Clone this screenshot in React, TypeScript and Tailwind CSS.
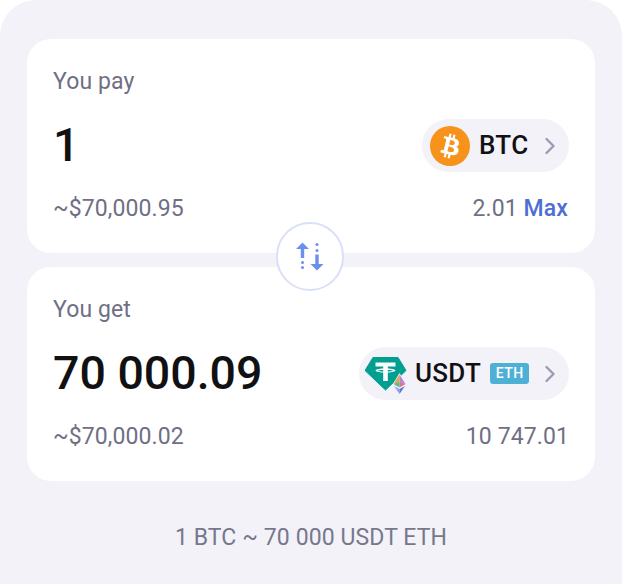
import React from 'react';
import { ChevronRight } from 'lucide-react';

const BtcIcon = () => (
  <svg width="40" height="40" viewBox="0 0 32 32" className="shrink-0">
    <circle cx="16" cy="16" r="16" fill="#f7931a" />
    <path
      fill="#fff"
      d="M23.189 14.02c.314-2.096-1.283-3.223-3.465-3.975l.708-2.84-1.728-.43-.69 2.765c-.454-.114-.92-.22-1.385-.326l.695-2.783L15.596 6l-.708 2.839c-.376-.086-.746-.17-1.104-.26l.002-.009-2.384-.595-.46 1.846s1.283.294 1.256.312c.7.175.826.638.805 1.006l-.806 3.235c.048.012.11.03.18.057l-.183-.045-1.13 4.532c-.086.212-.303.531-.793.41.018.025-1.256-.313-1.256-.313l-.858 1.978 2.25.561c.418.105.828.215 1.231.318l-.715 2.872 1.727.43.708-2.84c.472.127.93.245 1.378.357l-.706 2.828 1.728.43.715-2.866c2.948.558 5.164.333 6.097-2.333.752-2.146-.037-3.385-1.588-4.192 1.13-.26 1.98-1.003 2.207-2.538zm-3.95 5.538c-.533 2.147-4.148.986-5.32.695l.95-3.805c1.172.293 4.929.872 4.37 3.11zm.535-5.569c-.487 1.953-3.495.96-4.47.717l.86-3.45c.975.243 4.118.696 3.61 2.733z"
    />
  </svg>
);

const UsdtIcon = () => (
  <svg width="44" height="40" viewBox="0 0 44 40" className="shrink-0">
    <path d="M8 3.500h25L41 16.500 20.500 36 0 16.500z" fill="#009f8f" stroke="#009f8f" strokeLinejoin="round" />
    <path
      fill="#fff"
      d="M10.500 8.500h20v4h-7.700v2c4.300.2 7.700 1 7.700 2s-3.400 1.800-7.700 2v8.500h-4.600v-8.500c-4.300-.2-7.700-1-7.700-2s3.400-1.800 7.700-2v-2h-7.700zm7.700 7.500c-2.900.1-5.200.4-5.200.7 0 .5 3.400.8 7.500.8s7.500-.3 7.500-.8c0-.3-2.300-.6-5.200-.7v1.400h-4.600z"
    />
    <path d="M34.500 19L27.500 30.500 34.500 41l7-10.500z" fill="#f2f2f8" />
    <path d="M34.500 20.500l-6 9.500 6-2.500z" fill="#e9a33f" />
    <path d="M34.500 20.500l6 9.500-6-2.500z" fill="#b087d8" />
    <path d="M28.500 30l6-2.500v6z" fill="#5cbb8c" />
    <path d="M40.500 30l-6-2.500v6z" fill="#d9748f" />
    <path d="M29 32l5.500 3v5z" fill="#8fa3e8" />
    <path d="M40 32l-5.500 3v5z" fill="#5f76c9" />
  </svg>
);

const SwapIcon = () => (
  <svg width="34" height="34" viewBox="0 0 34 34" fill="#6b8fec">
    <path d="M9.500 2.500l6.500 6.500h-4.800v9H7.800V9H3z" />
    <circle cx="9.500" cy="22.500" r="1.500" />
    <circle cx="9.500" cy="27.500" r="1.500" />
    <circle cx="24" cy="4.500" r="1.500" />
    <circle cx="24" cy="10.500" r="1.500" />
    <path d="M22.300 14.500h3.400V24h4.800L24 30.500 17.500 24h4.800z" />
  </svg>
);

interface CardProps {
  label: string;
  amount: string;
  usd: string;
  pill: React.ReactNode;
  balance: React.ReactNode;
}

const Card: React.FC<CardProps> = ({ label, amount, usd, pill, balance }) => (
  <div className="h-[214px] rounded-[24px] bg-white pl-[26px] pr-[26px] pt-[28px]">
    <div className="text-[23px] leading-[30px] tracking-[0.1px] text-[#6f6f85]">{label}</div>
    <div className="mt-[22px] flex h-[53px] items-center justify-between">
      <span className="text-[46.500px] font-medium leading-none text-[#111114]">{amount}</span>
      {pill}
    </div>
    <div className="mt-[22px] flex items-center justify-between text-[23px] leading-[30px] tracking-[0.1px] text-[#6f6f85]">
      <span>{usd}</span>
      {balance}
    </div>
  </div>
);

export default function App() {
  return (
    <div className="relative h-[584px] w-[622px] overflow-hidden bg-white font-['Roboto',sans-serif]">
      <div className="h-full rounded-t-[36px] bg-[#f2f2f8] px-[27px] pt-[39px]">
        <div className="flex flex-col gap-[14px]">
          <Card
            label="You pay"
            amount="1"
            usd="~$70,000.95"
            pill={
              <div className="flex h-[53px] w-[147px] items-center rounded-full bg-[#f2f2f8] pl-[8px]">
                <BtcIcon />
                <span className="ml-[9px] text-[26px] font-medium tracking-[0.3px] text-[#111114]">BTC</span>
                <ChevronRight size={28} strokeWidth={2} className="ml-[8px] text-[#9a9ab0]" />
              </div>
            }
            balance={
              <span className="pr-[1px]">
                2.01 <span className="font-medium text-[#4f6fd0]">Max</span>
              </span>
            }
          />
          <Card
            label="You get"
            amount="70 000.09"
            usd="~$70,000.02"
            pill={
              <div className="flex h-[53px] w-[210px] items-center rounded-full bg-[#f2f2f8] pl-[6px]">
                <UsdtIcon />
                <span className="ml-[6px] text-[26px] font-medium tracking-[0.3px] text-[#111114]">USDT</span>
                <span className="ml-[9px] flex h-[21px] w-[39px] items-center justify-center rounded-[3px] bg-[#4fb0d6] text-[14px] font-medium tracking-[0.5px] text-white">
                  ETH
                </span>
                <ChevronRight size={28} strokeWidth={2} className="ml-[7px] text-[#9a9ab0]" />
              </div>
            }
            balance={<span>10 747.01</span>}
          />
        </div>
        <div className="mt-[42px] text-center text-[23px] leading-[30px] tracking-[0.1px] text-[#77778c]">1 BTC ~ 70 000 USDT ETH</div>
      </div>
      <div className="absolute left-[276px] top-[222px] flex h-[69px] w-[68px] items-center justify-center rounded-full border-2 border-[#d9e0f8] bg-white">
        <SwapIcon />
      </div>
    </div>
  );
}
